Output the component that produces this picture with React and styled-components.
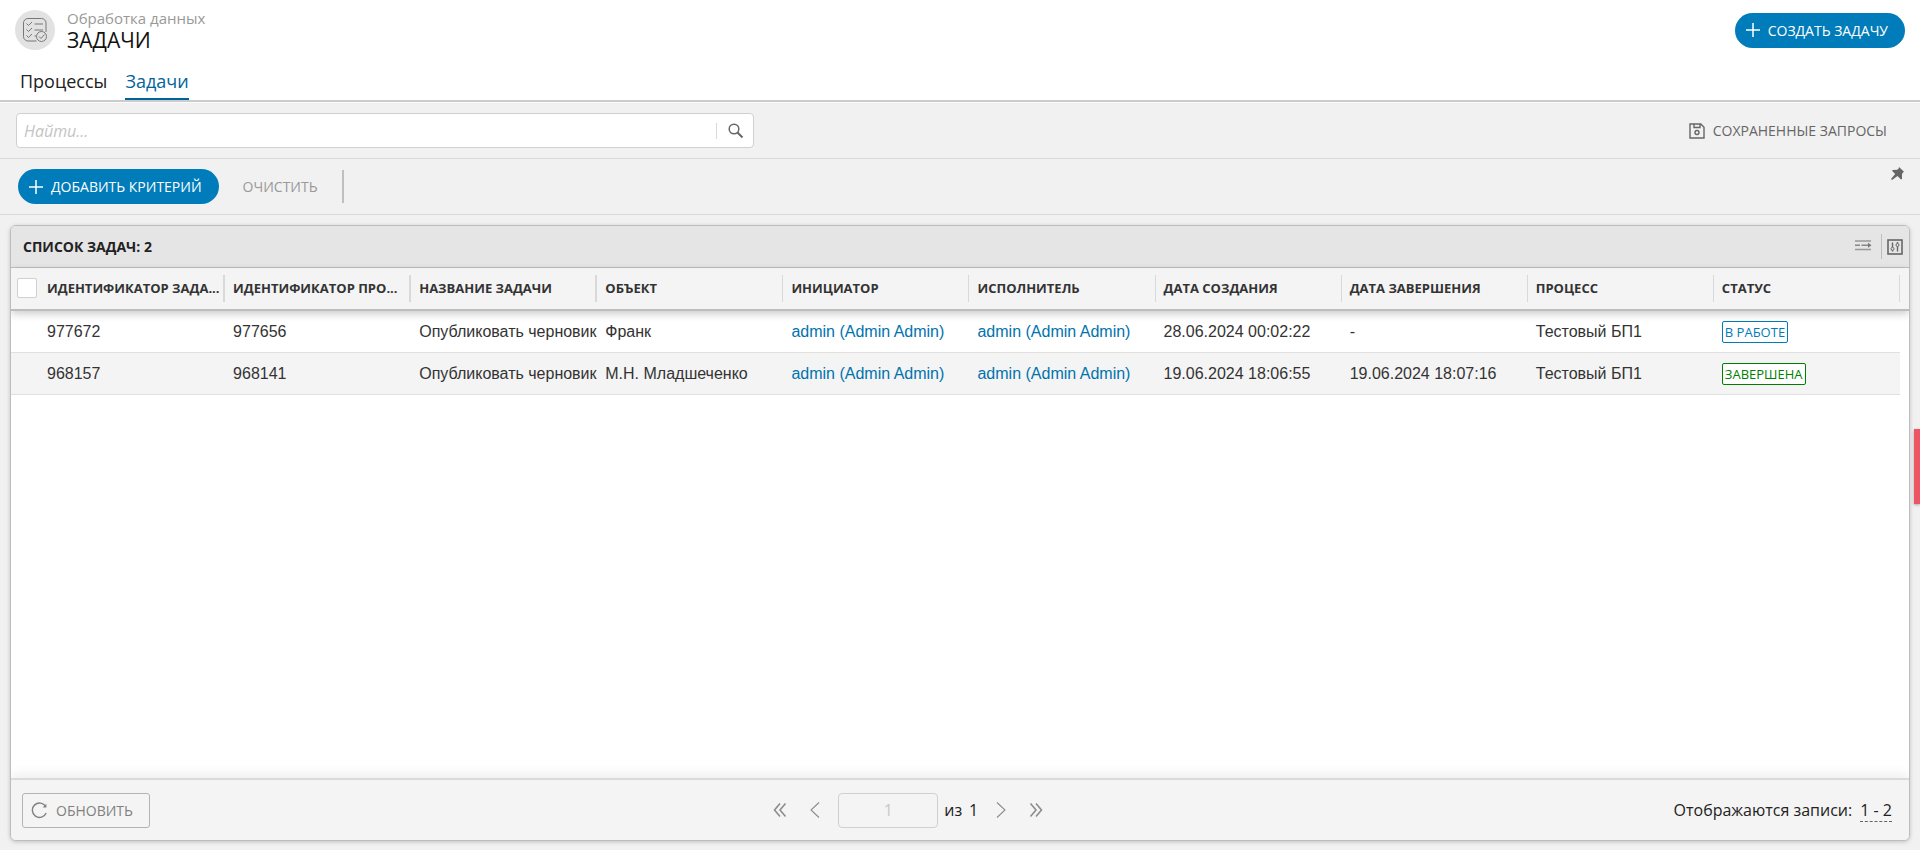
import React, { useState } from 'react';
import styled, { createGlobalStyle } from 'styled-components';

const GlobalStyle = createGlobalStyle`
  * {
    box-sizing: border-box;
  }

  body {
    margin: 0;
    background-color: #f1f1f1;
    color: #222;
    font-family: 'Open Sans', 'Noto Sans', sans-serif;
    font-size: 16px;
  }

  button,
  input {
    font-family: inherit;
  }
`;

const StyledPage = styled.div`
  min-height: 100vh;
  display: flex;
  flex-direction: column;
`;

const StyledHeader = styled.header`
  background-color: #fff;
  border-bottom: 2px solid #ccc;
`;

const StyledHeaderTop = styled.div`
  height: 60px;
  display: flex;
  align-items: center;
  gap: 12px;
  padding: 0 15px;
`;

const StyledLogo = styled.div`
  width: 40px;
  height: 40px;
  display: flex;
  align-items: center;
  justify-content: center;
  border-radius: 50%;
  background-color: #e2e2e2;
`;

const StyledTitles = styled.div`
  flex: 1;
`;

const StyledSection = styled.div`
  color: #999;
  font-size: 15px;
  line-height: 20px;
`;

const StyledTitle = styled.h1`
  margin: 0;
  color: #111;
  font-size: 21px;
  font-weight: 400;
  line-height: 24px;
`;

const StyledTabs = styled.nav`
  height: 40px;
  display: flex;
  gap: 18px;
  padding: 0 20px;
`;

const StyledTab = styled.a`
  height: 40px;
  color: ${({ $active }) => ($active ? '#00639c' : '#222')};
  font-size: 18px;
  line-height: 42px;
  text-decoration: none;
  border-bottom: ${({ $active }) => ($active ? '2px solid #00639c' : 'none')};
`;

const StyledPrimaryButton = styled.button`
  height: 35px;
  display: flex;
  align-items: center;
  gap: 8px;
  padding: 0 17px 0 11px;
  color: #fff;
  font-size: 14px;
  background-color: #007cba;
  border: none;
  border-radius: 18px;
  cursor: pointer;
`;

const StyledTextButton = styled.button`
  display: flex;
  align-items: center;
  gap: 8px;
  padding: 0;
  color: ${({ $muted }) => ($muted ? '#999' : '#666')};
  font-size: 14px;
  background: none;
  border: none;
  cursor: pointer;
`;

const StyledSearchRow = styled.div`
  height: 57px;
  display: flex;
  align-items: center;
  justify-content: space-between;
  padding: 0 33px 0 16px;
  border-top: 1px solid #fafafa;
  border-bottom: 1px solid #d9d9d9;
`;

const StyledSearch = styled.form`
  width: calc(40% - 10px);
  height: 35px;
  display: flex;
  align-items: center;
  background-color: #fff;
  border: 1px solid #d0d0d0;
  border-radius: 4px;
`;

const StyledSearchInput = styled.input`
  flex: 1;
  min-width: 0;
  padding: 0 7px;
  color: #333;
  font-size: 16px;
  background: none;
  border: none;
  outline: none;

  &::placeholder {
    color: #c4c4c4;
    font-style: italic;
  }
`;

const StyledSearchButton = styled.button`
  height: 16px;
  display: flex;
  align-items: center;
  padding: 0 9px 0 11px;
  color: #666;
  background: none;
  border: none;
  border-left: 1px solid #d9d9d9;
  cursor: pointer;
`;

const StyledCriteriaRow = styled.div`
  height: 56px;
  display: flex;
  align-items: center;
  padding: 0 16px 0 18px;
  border-bottom: 1px solid #d9d9d9;
`;

const StyledCriteriaActions = styled.div`
  flex: 1;
  display: flex;
  align-items: center;
  gap: 24px;
`;

const StyledDivider = styled.span`
  width: 2px;
  height: 33px;
  background-color: #bfbfbf;
`;

const StyledIconButton = styled.button`
  display: flex;
  align-self: ${({ $top }) => ($top ? 'flex-start' : 'center')};
  padding: ${({ $top }) => ($top ? '8px 0' : '0')};
  color: #666;
  background: none;
  border: none;
  cursor: pointer;
`;

const StyledPanel = styled.main`
  flex: 1;
  display: flex;
  flex-direction: column;
  margin: 10px 10px 9px;
  overflow: hidden;
  background-color: #fff;
  border: 1px solid #bdbdbd;
  border-radius: 6px;
  box-shadow: 0 1px 4px rgba(0, 0, 0, 0.2);
`;

const StyledPanelHeader = styled.div`
  height: 42px;
  display: flex;
  align-items: center;
  justify-content: space-between;
  padding: 0 6px 0 12px;
  background-color: #e5e5e5;
  border-bottom: 1px solid #bdbdbd;
`;

const StyledPanelTitle = styled.h2`
  margin: 0;
  font-size: 14px;
  font-weight: 700;
`;

const StyledPanelTools = styled.div`
  display: flex;
  align-items: center;
`;

const StyledToolDivider = styled.span`
  width: 1px;
  height: 25px;
  margin: 0 5px 0 9px;
  background-color: #bdbdbd;
`;

const StyledTableWrapper = styled.div`
  flex: 1;
`;

const StyledTable = styled.table`
  width: 100%;
  table-layout: fixed;
  border-spacing: 0;
`;

const StyledThead = styled.thead`
  position: relative;
  z-index: 1;
  box-shadow: 0 3px 8px rgba(0, 0, 0, 0.2);
`;

const StyledCheckCol = styled.col`
  width: 28px;
`;

const StyledEndCol = styled.col`
  width: 9px;
`;

const StyledTh = styled.th`
  height: 43px;
  padding: 0 0 1px;
  background-color: #f4f4f4;
  border-bottom: 2px solid #bdbdbd;
`;

const StyledThLabel = styled.div`
  height: 27px;
  padding-left: 8px;
  overflow: hidden;
  color: #333;
  font-size: 13px;
  font-weight: 700;
  line-height: 27px;
  text-align: left;
  text-overflow: ellipsis;
  white-space: nowrap;
  border-right: ${({ $wide }) => ($wide ? '2px' : '1px')} solid #d9d9d9;
`;

const StyledCheckbox = styled.input`
  appearance: none;
  width: 20px;
  height: 20px;
  display: block;
  margin: 0 0 0 6px;
  background-color: ${({ checked }) => (checked ? '#007cba' : '#fff')};
  border: 1px solid #d0d0d0;
  border-radius: 2px;
`;

const StyledRow = styled.tr`
  background-color: ${({ $even }) => ($even ? '#f4f4f4' : '#fff')};
`;

const StyledTd = styled.td`
  height: 42px;
  padding: 0 0 0 8px;
  overflow: hidden;
  color: #333;
  font-family: 'Liberation Sans', Arial, sans-serif;
  font-size: 16px;
  white-space: nowrap;
  border-bottom: 1px solid #e0e0e0;
`;

const StyledEndTd = styled.td`
  background-color: #fff;
`;

const StyledLink = styled.a`
  color: #0073ae;
  text-decoration: none;
`;

const StyledStatus = styled.span`
  display: inline-block;
  padding: 0 2px;
  color: ${({ $color }) => $color};
  font-family: 'Open Sans', 'Noto Sans', sans-serif;
  font-size: 13px;
  line-height: 20px;
  vertical-align: middle;
  background-color: #fff;
  border: 1px solid ${({ $color }) => $color};
  border-radius: 2px;
`;

const StyledFooter = styled.footer`
  height: 62px;
  display: flex;
  align-items: center;
  justify-content: space-between;
  padding: 0 17px 0 11px;
  background-color: #f4f4f4;
  border-top: 2px solid #dadada;
  box-shadow: 0 -3px 12px rgba(0, 0, 0, 0.08);
`;

const StyledRefreshButton = styled.button`
  height: 35px;
  display: flex;
  align-items: center;
  gap: 8px;
  padding: 0 16px 0 8px;
  color: #808080;
  font-size: 14px;
  background: none;
  border: 1px solid #b3b3b3;
  border-radius: 3px;
  cursor: pointer;
`;

const StyledPager = styled.div`
  display: flex;
  align-items: center;
  padding-right: 8px;
`;

const StyledPagerButton = styled.button`
  width: 35px;
  height: 35px;
  display: flex;
  align-items: center;
  justify-content: center;
  padding: 0;
  color: #8c8c8c;
  background: none;
  border: none;
`;

const StyledPageInput = styled.input`
  width: 100px;
  height: 35px;
  margin: 0 6px;
  color: #c8c8c8;
  font-size: 16px;
  text-align: center;
  background: none;
  border: 1px solid #d0d0d0;
  border-radius: 4px;
`;

const StyledPageTotal = styled.label`
  display: flex;
  gap: 7px;
  margin-right: 5px;
`;

const StyledRecords = styled.div`
  display: flex;
  gap: 8px;
`;

const StyledRange = styled.a`
  color: #222;
  text-decoration: none;
  border-bottom: 1px dashed #666;
`;

const StyledSideTab = styled.button`
  width: 6px;
  height: 75px;
  position: fixed;
  top: 429px;
  right: 0;
  padding: 0;
  background-color: #ef5464;
  border: none;
  box-shadow: 0 1px 3px rgba(0, 0, 0, 0.3);
`;

const PlusIcon = () => (
    <svg width="14" height="14" viewBox="0 0 14 14" stroke="currentColor" strokeWidth="1.5">
        <path d="M7 0v14M0 7h14" />
    </svg>
);

const TasksIcon = () => (
    <svg width="26" height="26" viewBox="0 0 26 26" fill="none" stroke="#777">
        <path d="M14.5 24H6a4.5 4.5 0 0 1-4.500-4.500V6A4.5 4.5 0 0 1 6 1.500h13.500A4.5 4.5 0 0 1 24 6v9" />
        <path d="M4.5 6.5l2 2L10 5M4.5 12.5l2 2L10 11M4.5 18.5l2 2L10 17M12.5 7H21M12.5 13H21M12.5 19h2" />
        <circle cx="19.5" cy="19.5" r="5" fill="#e2e2e2" />
        <path d="M17 19.5l2 2 3.5-4" />
    </svg>
);

const SearchIcon = () => (
    <svg width="16" height="16" viewBox="0 0 16 16" fill="none" stroke="currentColor">
        <circle cx="6" cy="6" r="4.8" strokeWidth="1.5" />
        <path d="M9.5 9.5l5 5" strokeWidth="2" />
    </svg>
);

const SaveIcon = () => (
    <svg width="16" height="16" viewBox="0 0 16 16" fill="none" stroke="currentColor" strokeWidth="1.4">
        <path d="M1 1h10.8L15 4.2V15H1z" />
        <path d="M5 1v3.5h6V1" />
        <circle cx="8" cy="9.5" r="2" />
    </svg>
);

const PinIcon = () => (
    <svg width="13" height="13" viewBox="0 0 13 13" fill="currentColor">
        <path d="M8 0L13 4.8 11.5 6 11 7.5V12l-1 .5L6.5 9 1 13l-1-1L4.2 7 1 3.8 1.8 3l4.4-.2L7.5 1.7z" />
    </svg>
);

const DensityIcon = () => (
    <svg width="17" height="13" viewBox="0 0 17 13" fill="none" stroke="#999">
        <path d="M0 1h16M0 9.5h16" strokeWidth="1.5" />
        <path d="M0 5.3h5M6.5 5.3H14" stroke="#888" strokeWidth="1.5" />
        <path d="M13 2.8l3.5 2.5L13 7.8z" fill="#777" stroke="none" />
    </svg>
);

const SettingsIcon = () => (
    <svg width="16" height="16" viewBox="0 0 16 16" fill="none" stroke="currentColor">
        <rect x="1" y="1" width="14" height="14" strokeWidth="1.6" />
        <path d="M5.5 3.5V8M5.5 11v1.5M10.5 3v1.5M10.5 7.5v5" strokeWidth="1.4" />
        <circle cx="5.5" cy="9.8" r="1.5" />
        <circle cx="10.5" cy="6" r="1.5" />
    </svg>
);

const RefreshIcon = () => (
    <svg width="17" height="17" viewBox="0 0 17 17" fill="none" stroke="currentColor" strokeWidth="1.4">
        <path d="M14.8 4.6A7.2 7.2 0 1 0 15.2 11" />
        <path d="M15.4 1.8v3.7h-3.7z" fill="currentColor" stroke="none" />
    </svg>
);

const ChevronIcon = ({ double, right }) => (
    <svg width="14" height="16" viewBox="0 0 14 16" fill="none" stroke="currentColor">
        {double ? (
            <path
                strokeWidth="1.6"
                d={right ? 'M1.5 1.5L7 8l-5.5 6.5M7 1.5L12.5 8 7 14.5' : 'M7 1.5L1.5 8 7 14.5M12.5 1.5L7 8l5.5 6.5'}
            />
        ) : (
            <path strokeWidth="1.1" d={right ? 'M3 .5L11 8l-8 7.5' : 'M11 .5L3 8l8 7.5'} />
        )}
    </svg>
);

const columns = [
    'ИДЕНТИФИКАТОР ЗАДА...',
    'ИДЕНТИФИКАТОР ПРО...',
    'НАЗВАНИЕ ЗАДАЧИ',
    'ОБЪЕКТ',
    'ИНИЦИАТОР',
    'ИСПОЛНИТЕЛЬ',
    'ДАТА СОЗДАНИЯ',
    'ДАТА ЗАВЕРШЕНИЯ',
    'ПРОЦЕСС',
    'СТАТУС'
];

const tasks = [
    {
        id: '977672',
        processId: '977656',
        name: 'Опубликовать черновик',
        object: 'Франк',
        user: 'admin (Admin Admin)',
        created: '28.06.2024 00:02:22',
        finished: '-',
        process: 'Тестовый БП1',
        status: 'В РАБОТЕ',
        color: '#007cba'
    },
    {
        id: '968157',
        processId: '968141',
        name: 'Опубликовать черновик',
        object: 'М.Н. Младшеченко',
        user: 'admin (Admin Admin)',
        created: '19.06.2024 18:06:55',
        finished: '19.06.2024 18:07:16',
        process: 'Тестовый БП1',
        status: 'ЗАВЕРШЕНА',
        color: '#008000'
    }
];

const Header = () => (
    <StyledHeader>
        <StyledHeaderTop>
            <StyledLogo>
                <TasksIcon />
            </StyledLogo>
            <StyledTitles>
                <StyledSection>Обработка данных</StyledSection>
                <StyledTitle>ЗАДАЧИ</StyledTitle>
            </StyledTitles>
            <StyledPrimaryButton type="button">
                <PlusIcon />
                СОЗДАТЬ ЗАДАЧУ
            </StyledPrimaryButton>
        </StyledHeaderTop>
        <StyledTabs>
            <StyledTab href="#processes">Процессы</StyledTab>
            <StyledTab href="#tasks" $active>Задачи</StyledTab>
        </StyledTabs>
    </StyledHeader>
);

const Filters = () => {
    const [query, setQuery] = useState('');

    return (
        <>
            <StyledSearchRow>
                <StyledSearch onSubmit={e => e.preventDefault()}>
                    <StyledSearchInput
                        type="text"
                        name="query"
                        aria-label="Найти"
                        placeholder="Найти..."
                        value={query}
                        onChange={e => setQuery(e.target.value)}
                    />
                    <StyledSearchButton type="submit" aria-label="Найти">
                        <SearchIcon />
                    </StyledSearchButton>
                </StyledSearch>
                <StyledTextButton type="button">
                    <SaveIcon />
                    СОХРАНЕННЫЕ ЗАПРОСЫ
                </StyledTextButton>
            </StyledSearchRow>
            <StyledCriteriaRow>
                <StyledCriteriaActions>
                    <StyledPrimaryButton type="button">
                        <PlusIcon />
                        ДОБАВИТЬ КРИТЕРИЙ
                    </StyledPrimaryButton>
                    <StyledTextButton type="button" $muted onClick={() => setQuery('')}>
                        ОЧИСТИТЬ
                    </StyledTextButton>
                    <StyledDivider />
                </StyledCriteriaActions>
                <StyledIconButton type="button" aria-label="Закрепить" $top>
                    <PinIcon />
                </StyledIconButton>
            </StyledCriteriaRow>
        </>
    );
};

const TaskRow = ({ task, even }) => (
    <StyledRow $even={even}>
        <StyledTd />
        <StyledTd>{task.id}</StyledTd>
        <StyledTd>{task.processId}</StyledTd>
        <StyledTd>{task.name}</StyledTd>
        <StyledTd>{task.object}</StyledTd>
        <StyledTd>
            <StyledLink href="#user">{task.user}</StyledLink>
        </StyledTd>
        <StyledTd>
            <StyledLink href="#user">{task.user}</StyledLink>
        </StyledTd>
        <StyledTd>{task.created}</StyledTd>
        <StyledTd>{task.finished}</StyledTd>
        <StyledTd>{task.process}</StyledTd>
        <StyledTd>
            <StyledStatus $color={task.color}>{task.status}</StyledStatus>
        </StyledTd>
        <StyledEndTd />
    </StyledRow>
);

const TaskTable = () => {
    const [allChecked, setAllChecked] = useState(false);

    return (
        <StyledTable>
            <colgroup>
                <StyledCheckCol />
                {columns.map(column => (
                    <col key={column} />
                ))}
                <StyledEndCol />
            </colgroup>
            <StyledThead>
                <tr>
                    <StyledTh>
                        <StyledCheckbox
                            type="checkbox"
                            aria-label="Выбрать все"
                            checked={allChecked}
                            onChange={e => setAllChecked(e.target.checked)}
                        />
                    </StyledTh>
                    {columns.map((column, index) => (
                        <StyledTh key={column}>
                            <StyledThLabel $wide={index < 3}>{column}</StyledThLabel>
                        </StyledTh>
                    ))}
                    <StyledTh />
                </tr>
            </StyledThead>
            <tbody>
                {tasks.map((task, index) => (
                    <TaskRow key={task.id} task={task} even={index % 2 === 1} />
                ))}
            </tbody>
        </StyledTable>
    );
};

const Footer = () => (
    <StyledFooter>
        <StyledRefreshButton type="button">
            <RefreshIcon />
            ОБНОВИТЬ
        </StyledRefreshButton>
        <StyledPager>
            <StyledPagerButton type="button" aria-label="Первая страница">
                <ChevronIcon double />
            </StyledPagerButton>
            <StyledPagerButton type="button" aria-label="Предыдущая страница">
                <ChevronIcon />
            </StyledPagerButton>
            <StyledPageInput id="page-input" type="text" name="page" value="1" disabled />
            <StyledPageTotal htmlFor="page-input">
                <span>из</span>
                <span>1</span>
            </StyledPageTotal>
            <StyledPagerButton type="button" aria-label="Следующая страница">
                <ChevronIcon right />
            </StyledPagerButton>
            <StyledPagerButton type="button" aria-label="Последняя страница">
                <ChevronIcon double right />
            </StyledPagerButton>
        </StyledPager>
        <StyledRecords>
            Отображаются записи:
            <StyledRange href="#range">1 - 2</StyledRange>
        </StyledRecords>
    </StyledFooter>
);

const App = () => (
    <StyledPage>
        <GlobalStyle />
        <Header />
        <Filters />
        <StyledPanel>
            <StyledPanelHeader>
                <StyledPanelTitle>СПИСОК ЗАДАЧ: 2</StyledPanelTitle>
                <StyledPanelTools>
                    <StyledIconButton type="button" aria-label="Плотность строк">
                        <DensityIcon />
                    </StyledIconButton>
                    <StyledToolDivider />
                    <StyledIconButton type="button" aria-label="Настройка столбцов">
                        <SettingsIcon />
                    </StyledIconButton>
                </StyledPanelTools>
            </StyledPanelHeader>
            <StyledTableWrapper>
                <TaskTable />
            </StyledTableWrapper>
            <Footer />
        </StyledPanel>
        <StyledSideTab type="button" aria-label="Обратная связь" />
    </StyledPage>
);

export default App;
